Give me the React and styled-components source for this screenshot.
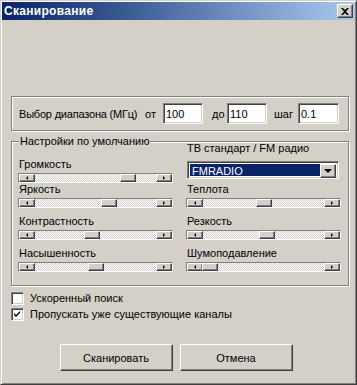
import React from 'react'
import styled, { createGlobalStyle } from 'styled-components'

const GlobalStyle = createGlobalStyle`
  html, body {
    margin: 0;
    padding: 0;
    background: #d4d0c8;
  }
  body {
    font-family: "Liberation Sans", Arial, sans-serif;
    font-size: 11px;
    color: #000;
  }
`;

const Window = styled.div`
  width: 357px;
  height: 385px;
  box-sizing: border-box;
  background: #d4d0c8;
  border: 1px solid;
  border-color: #d4d0c8 #404040 #404040 #d4d0c8;
  box-shadow: inset 1px 1px #fff, inset -1px -1px #808080;
  padding: 1px;
  display: flex;
  flex-direction: column;
`;

const TitleBar = styled.div`
  height: 18px;
  flex: none;
  display: flex;
  align-items: center;
  justify-content: space-between;
  padding: 0 2px 0 2px;
  background: linear-gradient(90deg, #0a246a 0%, #3a5a94 35%, #7f9fcf 75%, #a6caf0 100%);
`;

const Title = styled.span`
  color: #fff;
  font-weight: bold;
  font-size: 12px;
  letter-spacing: 0.3px;
`;

const CloseButton = styled.button`
  width: 16px;
  height: 14px;
  padding: 0;
  box-sizing: border-box;
  background: #d4d0c8;
  border: 1px solid;
  border-color: #fff #404040 #404040 #fff;
  box-shadow: inset -1px -1px #808080;
  display: flex;
  align-items: center;
  justify-content: center;
`;

const Body = styled.div`
  flex: 1;
  padding: 76px 6px 0 9px;
  display: flex;
  flex-direction: column;
`;

const RangeBox = styled.div`
  height: 35px;
  box-sizing: border-box;
  border: 1px solid #808080;
  box-shadow: inset 1px 1px #fff, 1px 1px #fff;
  display: flex;
  align-items: center;
  padding-left: 7px;
`;

const Text = styled.span`
  flex: none;
  box-sizing: border-box;
  width: ${({ $w }) => $w}px;
  padding-left: ${({ $pl }) => $pl || 0}px;
  letter-spacing: ${({ $tight }) => ($tight ? '-0.2px' : 'normal')};
  white-space: nowrap;
  overflow: hidden;
`;

const Field = styled.input`
  flex: none;
  width: ${({ $w }) => $w || 40}px;
  height: 21px;
  box-sizing: border-box;
  border: 1px solid;
  border-color: #808080 #fff #fff #808080;
  box-shadow: inset 1px 1px #404040, inset -1px -1px #d4d0c8;
  background: #fff;
  font-family: inherit;
  font-size: 11px;
  padding: 0 2px;
  outline: none;
`;

const GroupBox = styled.div`
  position: relative;
  margin-top: 10px;
  border: 1px solid #808080;
  box-shadow: inset 1px 1px #fff, 1px 1px #fff;
  padding: 0 6px 6px 6px;
  display: grid;
  grid-template-columns: 155px 155px;
  grid-template-rows: 41px 32px 32px 32px;
  column-gap: 13px;
`;

const Caption = styled.span`
  position: absolute;
  top: -7px;
  left: 7px;
  padding: 0 1px;
  line-height: 13px;
  background: #d4d0c8;
`;

const Cell = styled.div`
  align-self: ${({ $end }) => ($end ? 'end' : 'start')};
  display: flex;
  flex-direction: column;
`;

const Label = styled.div`
  line-height: 13px;
  height: 13px;
  margin-bottom: ${({ $mb }) => ($mb == null ? 2 : $mb)}px;
  padding-left: 1px;
  white-space: nowrap;
`;

const Slider = styled.div`
  position: relative;
  width: 155px;
  height: 10px;
  box-sizing: border-box;
  border: 1px solid;
  border-color: #808080 #fff #fff #808080;
  display: flex;
`;

const Raised = styled.div`
  box-sizing: border-box;
  background: #d4d0c8;
  border: 1px solid;
  border-color: #fff #404040 #404040 #fff;
  box-shadow: inset -1px -1px #808080;
`;

const ArrowButton = styled(Raised)`
  width: 16px;
  height: 8px;
  flex: none;
  display: flex;
  align-items: center;
  justify-content: center;
  &::after {
    content: '';
    width: 0;
    height: 0;
    border-top: 2px solid transparent;
    border-bottom: 2px solid transparent;
    ${({ $dir }) =>
      $dir === 'left'
        ? 'border-right: 2px solid #000;'
        : 'border-left: 2px solid #000;'}
  }
`;

const Track = styled.div`
  flex: 1;
  background-color: #d4d0c8;
  background-image: conic-gradient(#fff 25%, transparent 0 50%, #fff 0 75%, transparent 0);
  background-size: 2px 2px;
`;

const Thumb = styled(Raised)`
  position: absolute;
  top: 0;
  width: 16px;
  height: 8px;
`;

const Combo = styled.div`
  margin-left: 1px;
  width: 152px;
  height: 18px;
  box-sizing: border-box;
  border: 1px solid;
  border-color: #808080 #fff #fff #808080;
  box-shadow: inset 1px 1px #404040, inset -1px -1px #d4d0c8;
  background: #fff;
  padding: 2px;
  display: flex;
`;

const ComboValue = styled.div`
  flex: 1;
  background: #0a246a;
  color: #fff;
  line-height: 14px;
  padding-left: 2px;
`;

const DropButton = styled(Raised)`
  width: 16px;
  height: 14px;
  flex: none;
  display: flex;
  align-items: center;
  justify-content: center;
  &::after {
    content: '';
    border-left: 4px solid transparent;
    border-right: 4px solid transparent;
    border-top: 4px solid #000;
  }
`;

const CheckList = styled.div`
  margin-top: 4px;
  display: flex;
  flex-direction: column;
`;

const CheckRow = styled.label`
  height: 16px;
  display: flex;
  align-items: center;
  gap: 6px;
  white-space: nowrap;
`;

const Box = styled.span`
  width: 13px;
  height: 13px;
  box-sizing: border-box;
  border: 1px solid;
  border-color: #808080 #fff #fff #808080;
  box-shadow: inset 1px 1px #404040, inset -1px -1px #d4d0c8;
  background: #fff;
  display: flex;
  align-items: center;
  justify-content: center;
`;

const ButtonRow = styled.div`
  margin-top: 22px;
  padding-right: 8px;
  display: flex;
  justify-content: center;
  gap: 7px;
`;

const Button = styled.button`
  width: 113px;
  height: 27px;
  box-sizing: border-box;
  background: #d4d0c8;
  border: 1px solid;
  border-color: #fff #404040 #404040 #fff;
  box-shadow: inset -1px -1px #808080, inset 1px 1px #d4d0c8;
  font-family: inherit;
  font-size: 11px;
  color: #000;
  padding: 0;
`;

const Range = ({ thumb }) => (
  <Slider>
    <ArrowButton $dir="left" />
    <Track />
    <ArrowButton $dir="right" />
    <Thumb style={{ left: thumb - 1 }} />
  </Slider>
);

const Setting = ({ label, thumb, end }) => (
  <Cell $end={end}>
    <Label>{label}</Label>
    <Range thumb={thumb} />
  </Cell>
);

const Check = ({ checked, children }) => (
  <CheckRow>
    <Box>
      {checked && (
        <svg width="7" height="7" viewBox="0 0 7 7">
          <path d="M0 2 L2 4 L6 0 L6 2 L2 6 L0 4 Z" fill="#000" />
        </svg>
      )}
    </Box>
    {children}
  </CheckRow>
);

const App = () => {
  return (
    <Window>
      <GlobalStyle />
      <TitleBar>
        <Title>Сканирование</Title>
        <CloseButton>
          <svg width="8" height="7" viewBox="0 0 8 7">
            <path d="M0 0 L2 0 L4 2 L6 0 L8 0 L5 3.5 L8 7 L6 7 L4 5 L2 7 L0 7 L3 3.5 Z" fill="#000" />
          </svg>
        </CloseButton>
      </TitleBar>

      <Body>
        <RangeBox>
          <Text $w={126} $tight>Выбор диапазона (МГц)</Text>
          <Text $w={18}>от</Text>
          <Field defaultValue="100" />
          <Text $w={24} $pl={9}>до</Text>
          <Field defaultValue="110" />
          <Text $w={31} $pl={7}>шаг</Text>
          <Field $w={41} defaultValue="0.1" />
        </RangeBox>

        <GroupBox>
          <Caption>Настройки по умолчанию</Caption>
          <Setting label="Громкость" thumb={102} end />
          <Cell>
            <Label $mb={6}>ТВ стандарт / FM радио</Label>
            <Combo>
              <ComboValue>FMRADIO</ComboValue>
              <DropButton />
            </Combo>
          </Cell>
          <Setting label="Яркость" thumb={83} />
          <Setting label="Теплота" thumb={70} />
          <Setting label="Контрастность" thumb={66} />
          <Setting label="Резкость" thumb={73} />
          <Setting label="Насышенность" thumb={70} />
          <Setting label="Шумоподавление" thumb={16} />
        </GroupBox>

        <CheckList>
          <Check>Ускоренный поиск</Check>
          <Check checked>Пропускать уже существующие каналы</Check>
        </CheckList>

        <ButtonRow>
          <Button>Сканировать</Button>
          <Button>Отмена</Button>
        </ButtonRow>
      </Body>
    </Window>
  );
}

export default App
